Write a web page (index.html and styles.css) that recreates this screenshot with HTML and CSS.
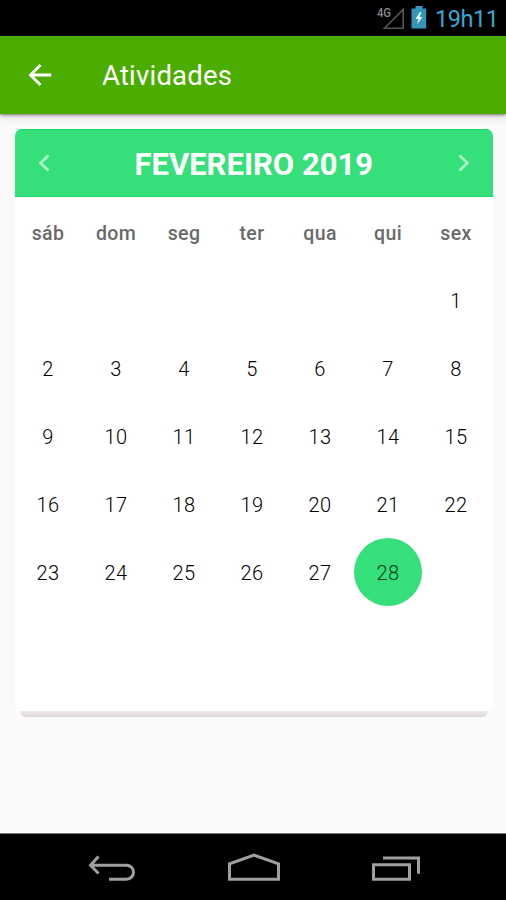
FILE: index.html
```html
<!DOCTYPE html>
<html lang="pt-BR">
<head>
<meta charset="utf-8">
<title>Atividades</title>
<link rel="stylesheet" href="styles.css">
</head>
<body>
<div class="status">
  <svg class="signal" width="28" height="26" viewBox="0 0 28 26"><path d="M26.2 4.5V23.2H7.5Z" fill="none" stroke="#555" stroke-width="1.6"/><text class="net" x="0" y="11.5" textLength="14" lengthAdjust="spacingAndGlyphs">4G</text></svg>
  <svg class="battery" width="16" height="23" viewBox="0 0 16 23"><path d="M1 2.5H4.5V0H11.500V2.500H15.200V22.500H.5V2.500Z" fill="#3495b8"/><path d="M9 6 4.500 13H7.500L6 18.500 11.500 11H8.500L10.500 6Z" fill="#e4f8ff"/></svg>
  <span class="clock">19h11</span>
</div>
<header class="appbar">
  <svg class="back" width="24" height="24" viewBox="0 0 24 24"><path d="M23.200 12H2.500M12.500 2 2.500 12 12.500 22" fill="none" stroke="#fff" stroke-width="2.900"/></svg>
  <h1 class="title">Atividades</h1>
</header>
<main class="content">
  <section class="card">
    <div class="month">
      <svg width="12" height="18" viewBox="0 0 12 18"><path d="M10.500 1.500 2.500 9 10.500 16.500" class="chev"/></svg>
      <h2 class="month-name">FEVEREIRO 2019</h2>
      <svg width="12" height="18" viewBox="0 0 12 18"><path d="M1.500 1.500 9.500 9 1.500 16.500" class="chev"/></svg>
    </div>
    <div class="grid">
      <span class="wd">sáb</span><span class="wd">dom</span><span class="wd">seg</span><span class="wd">ter</span><span class="wd">qua</span><span class="wd">qui</span><span class="wd">sex</span>
      <span class="day first">1</span><span class="day">2</span><span class="day">3</span><span class="day">4</span><span class="day">5</span><span class="day">6</span><span class="day">7</span><span class="day">8</span><span class="day">9</span><span class="day">10</span><span class="day">11</span><span class="day">12</span><span class="day">13</span><span class="day">14</span><span class="day">15</span><span class="day">16</span><span class="day">17</span><span class="day">18</span><span class="day">19</span><span class="day">20</span><span class="day">21</span><span class="day">22</span><span class="day">23</span><span class="day">24</span><span class="day">25</span><span class="day">26</span><span class="day">27</span><span class="day selected">28</span>
    </div>
  </section>
  <div class="card-edge"></div>
</main>
<nav class="navbar">
  <svg width="48" height="28" viewBox="0 0 48 28"><path d="M10.500 3.500 2.500 12.200 10.500 20.500M3 12.200H38.500A7 7 0 0 1 38.500 26.200H21" class="nav-line"/></svg>
  <svg width="54" height="28" viewBox="0 0 54 28"><path d="M2.500 26.200V10.900L27 2.200 51.500 10.900V26.200Z" class="nav-line"/></svg>
  <svg width="50" height="28" viewBox="0 0 50 28"><path d="M2.500 11.700H38.500V26.200H2.500ZM12 5H47.500V20.800" class="nav-line"/></svg>
</nav>
</body>
</html>
```
FILE: styles.css
```css
* { box-sizing: border-box; }
body {
  margin: 0;
  height: 900px;
  display: flex;
  flex-direction: column;
  overflow: hidden;
  background: #fafafa;
  font-family: Roboto, "Liberation Sans", sans-serif;
}
.status {
  height: 36px;
  flex: none;
  display: flex;
  justify-content: flex-end;
  padding-right: 9px;
  background: #000;
}
.signal { margin-top: 5px; }
.net { font-size: 12px; font-weight: 500; fill: #888; }
.battery { margin: 6px 0 0 6px; }
.clock {
  margin-left: 8px;
  width: 62px;
  text-align: right;
  font-size: 23.500px;
  letter-spacing: -.45px;
  line-height: 38px;
  color: #37a8d4;
}
.appbar {
  height: 78px;
  flex: none;
  display: flex;
  align-items: center;
  padding-left: 28px;
  background: #4bad00;
  box-shadow: 0 1px 3px rgba(70, 45, 60, .65), 0 5px 8px rgba(70, 45, 60, .1);
}
.title {
  margin: 2px 0 0 50px;
  font-size: 27.500px;
  letter-spacing: .2px;
  font-weight: 400;
  line-height: 32px;
  color: #fff;
}
.content { flex: 1; padding: 15px 13px 0 14.500px; }
.card {
  height: 583px;
  background: #fff;
  border-radius: 7px;
  overflow: hidden;
}
.month {
  height: 68px;
  display: flex;
  align-items: center;
  justify-content: space-between;
  padding: 0 23px;
  background: #35e07a;
  border-bottom: 1px solid #1cd568;
  border-top: 1px solid #1cd568;
}
.month-name {
  margin: 3px 0 0;
  font-size: 31px;
  line-height: 36px;
  font-weight: 700;
  color: #fff;
}
.chev { fill: none; stroke: #b0f5cc; stroke-width: 2.6; }
.grid {
  display: grid;
  grid-template-columns: repeat(7, 68px);
  grid-auto-rows: 68px;
  margin: 1px 0 0 -.5px;
}
.wd, .day {
  display: flex;
  align-items: center;
  justify-content: center;
  padding-top: 2px;
  letter-spacing: .4px;
}
.wd { font-size: 19.500px; font-weight: 500; color: #6a6a6a; }
.day { font-size: 20px; font-weight: 300; color: #000; }
.first { grid-column: 7; }
.selected { border-radius: 50%; background: #35e07a; color: #053a1a; }
.card-edge {
  height: 6px;
  margin: -1px 5px 0;
  border-radius: 0 0 6px 6px;
  background: linear-gradient(#f0ebee, #ddd5d9);
}
.navbar {
  height: 67px;
  flex: none;
  display: flex;
  align-items: flex-start;
  justify-content: space-between;
  padding: 19px 85px 0 88px;
  background: #000;
  border-top: 1px solid #777;
}
.nav-line { fill: none; stroke: #a0a0a0; stroke-width: 3; }
```
